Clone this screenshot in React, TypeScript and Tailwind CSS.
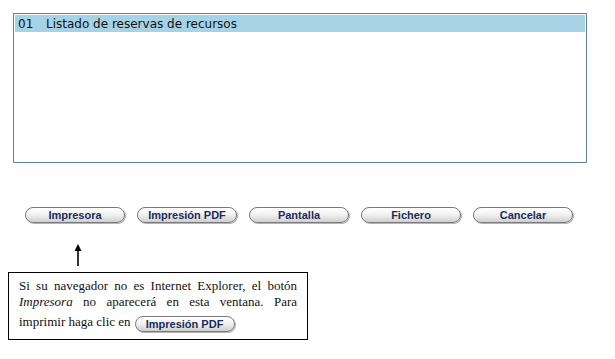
import React from 'react'

const labels = ['Impresora', 'Impresión PDF', 'Pantalla', 'Fichero', 'Cancelar']

function PillButton({ label, className = '' }: { label: string; className?: string }) {
  return (
    <button
      type="button"
      className={`h-[16px] w-[100px] rounded-full border border-[#7a7a7a] bg-gradient-to-b from-[#ffffff] via-[#f0f0f0] to-[#cfcfcf] font-['Liberation_Sans',Arial,sans-serif] text-[11px] font-bold leading-[14px] text-[#1b2c5c] shadow-[1px_1px_0_#b5b5b5] ${className}`}
    >
      {label}
    </button>
  )
}

export default function App() {
  return (
    <div className="min-h-[359px] w-[615px] bg-white">
      {/* Listado */}
      <div className="ml-[13px] pt-[13px]">
        <div className="h-[150px] w-[574px] border border-[#5b80a8] bg-white p-px">
          <div className="flex h-[17px] items-center bg-[#a6d2e6] pl-[3px] font-['DejaVu_Sans',Tahoma,sans-serif] text-[12px] text-[#111]">
            <span className="w-[28px]">01</span>
            <span>Listado de reservas de recursos</span>
          </div>
        </div>
      </div>

      {/* Botones */}
      <div className="ml-[25px] mt-[44px] flex gap-[12px]">
        {labels.map((l) => (
          <PillButton key={l} label={l} />
        ))}
      </div>

      {/* Flecha */}
      <div className="ml-[73px] mt-[21px] h-[22px]">
        <svg width="10" height="22" viewBox="0 0 10 22">
          <line x1="5" y1="5" x2="5" y2="22" stroke="#333" strokeWidth="2" />
          <polygon points="5,0 1.5,7 8.5,7" fill="#000" />
        </svg>
      </div>

      {/* Nota */}
      <div className="ml-[8px] mt-[6px] w-[300px] border border-black px-[10px] pb-[7px] pt-[5px] text-justify font-['Liberation_Serif','Times_New_Roman',serif] text-[13px] leading-[16px] text-[#111]">
        Si su navegador no es Internet Explorer, el botón <i>Impresora</i> no aparecerá en esta ventana. Para
        imprimir haga clic en
        <PillButton label="Impresión PDF" className="ml-[4px] mt-[6px] align-[-2px]" />
      </div>
    </div>
  )
}
